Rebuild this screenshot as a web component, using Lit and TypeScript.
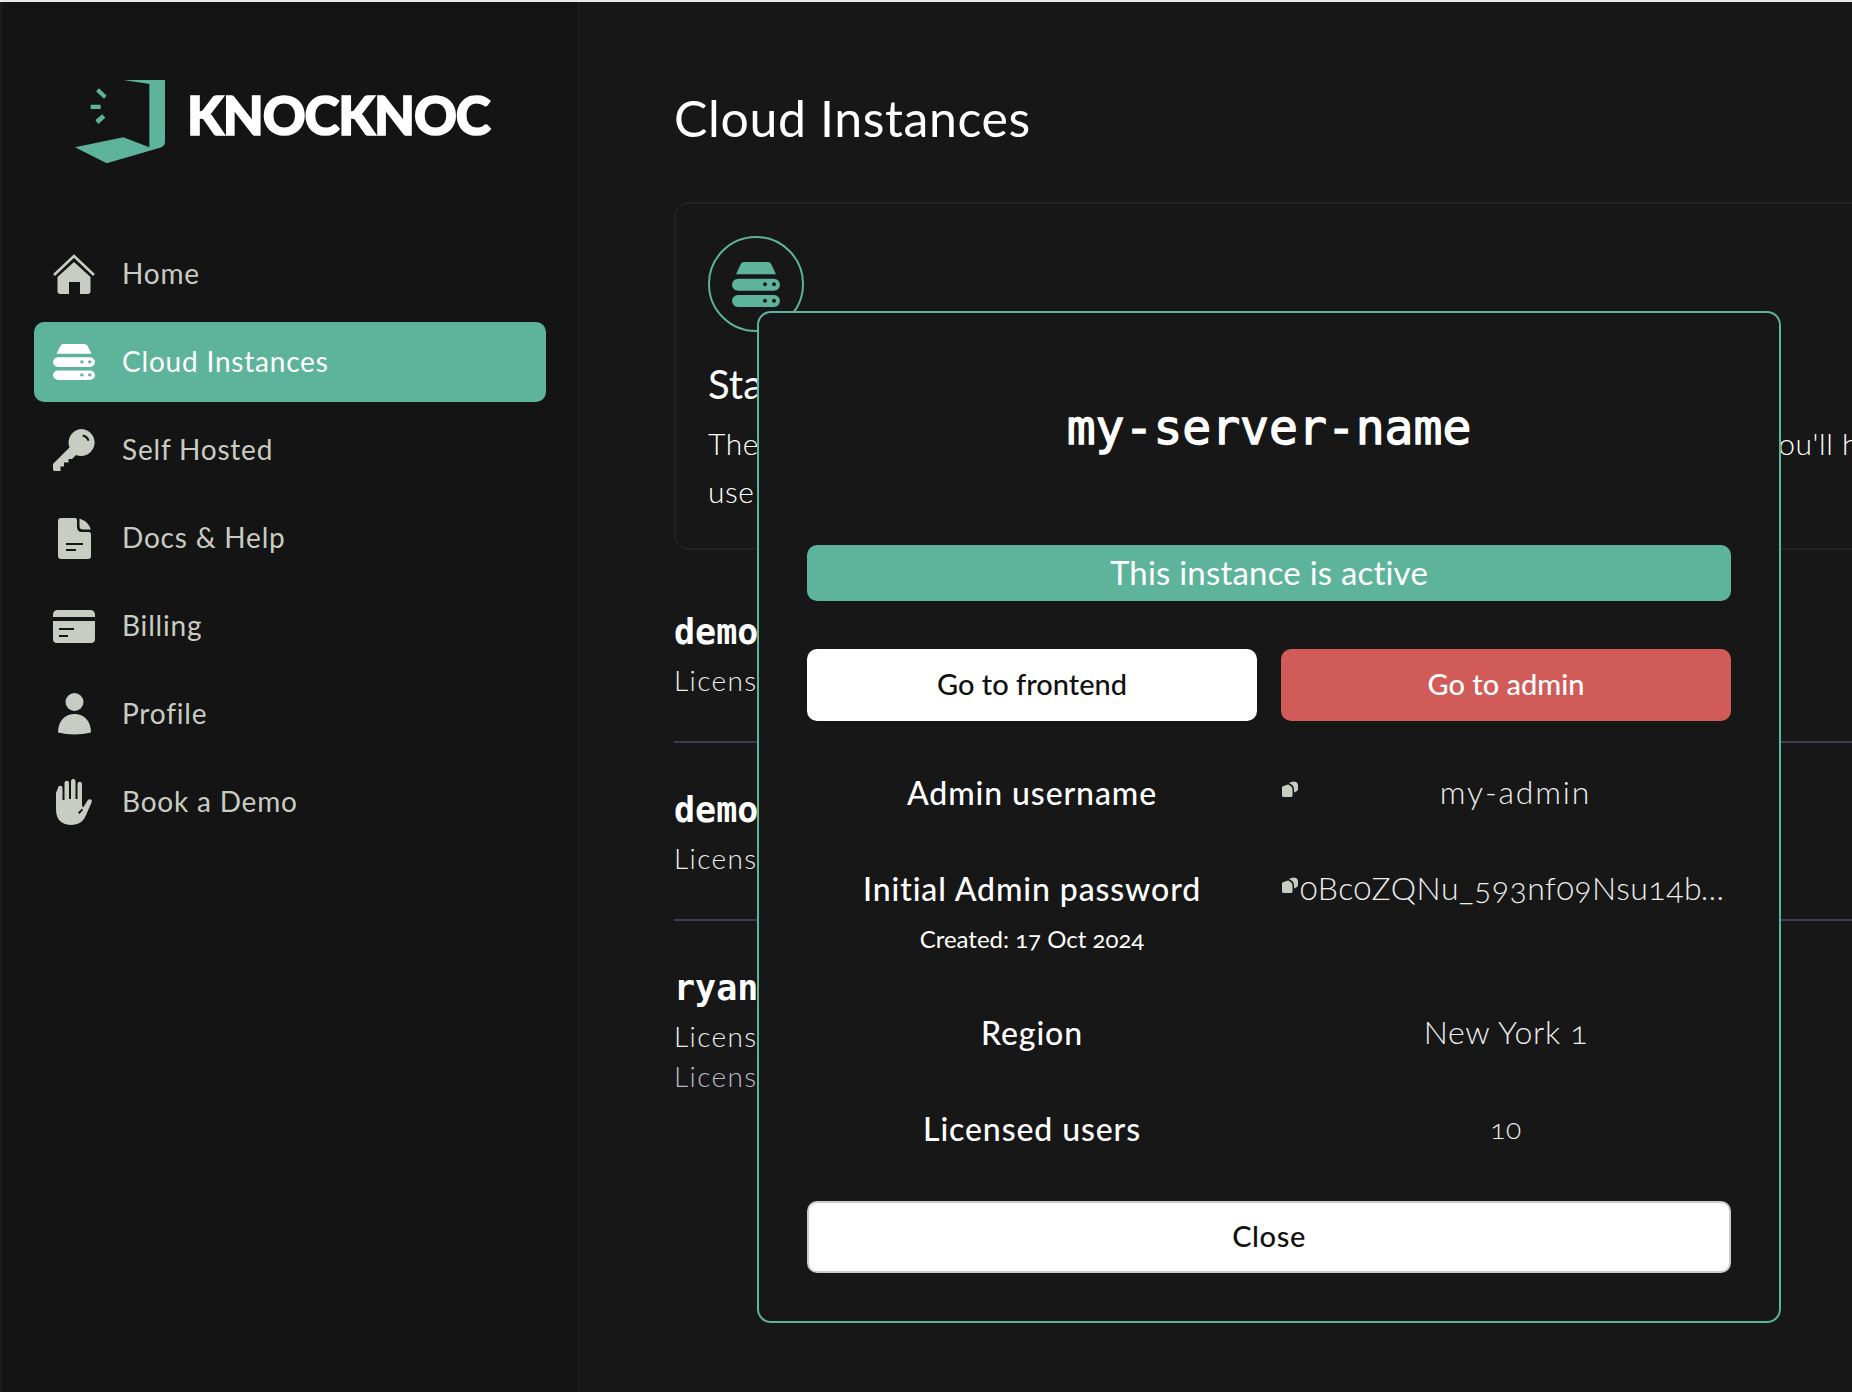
import { LitElement, html, css, svg } from 'lit';
import { customElement } from 'lit/decorators.js';

// server glyph is used both in the nav and the card badge
const serverIcon = svg`<path fill-rule="evenodd" d="M12 37 26 7Q29 0 36 0H108Q115 0 118 7L132 37ZM18 50H126A18 18 0 0 1 126 86H18A18 18 0 0 1 18 50ZM99 61A6 6 0 1 0 99 73 6 6 0 1 0 99 61ZM126 61A6 6 0 1 0 126 73 6 6 0 1 0 126 61ZM18 99H126A18 18 0 0 1 126 135H18A18 18 0 0 1 18 99ZM99 110A6 6 0 1 0 99 122 6 6 0 1 0 99 110ZM126 110A6 6 0 1 0 126 122 6 6 0 1 0 126 110Z"/>`;

const icons: Record<string, unknown> = {
  home: html`<svg width="42" height="40" viewBox="0 0 42 40" fill="currentColor"><path d="M1 21 21 2 41 21" fill="none" stroke="currentColor" stroke-width="2.6"/><path fill-rule="evenodd" d="M21 8 37.500 23V37Q37.500 40 34.500 40H27V28H16V40H7.500Q4.500 40 4.500 37V23Z"/></svg>`,
  server: html`<svg width="42" height="36" viewBox="0 0 144 135" preserveAspectRatio="none" fill="currentColor">${serverIcon}</svg>`,
  key: html`<svg width="42" height="42" viewBox="0 0 42 42" fill="currentColor"><path fill-rule="evenodd" d="M28.500 0A13.500 13.500 0 1 1 23 26L19 30H15.500V33.500H11V37.500H7.500V42H1.500Q0 42 0 40V35L16.500 18.500A13.500 13.500 0 0 1 28.500 0ZM30 5.500 29.500 7.500Q33.500 8.500 34.500 12L36.500 11.500Q35 6.500 30 5.500Z"/></svg>`,
  doc: html`<svg width="33" height="41" viewBox="0 0 33 41" fill="currentColor"><path fill-rule="evenodd" d="M3 0H17Q19 0 19 2V9Q19 14 24 14H31Q33 14 33 16V38Q33 41 30 41H3Q0 41 0 38V3Q0 0 3 0ZM8 25V27H25V25ZM8 31V33H18V31Z"/><path d="M21.500 .5Q31 4 32.800 11.500H25Q21.500 11.500 21.500 8Z"/></svg>`,
  card: html`<svg width="42" height="33" viewBox="0 0 42 33" fill="currentColor"><path fill-rule="evenodd" d="M5 0H37Q42 0 42 5V7H0V5Q0 0 5 0ZM0 11H42V29Q42 33 38 33H4Q0 33 0 29ZM6 18V20H21V18ZM6 25V27H15V25Z"/></svg>`,
  person: html`<svg width="33" height="42" viewBox="0 0 33 42" fill="currentColor"><circle cx="16.500" cy="9" r="9"/><path d="M16.500 21C26 21 33 28 33 39.500Q25 41.500 16.500 41.500T0 39.500C0 28 7 21 16.500 21Z"/></svg>`,
  hand: html`<svg width="36" height="46" viewBox="0 0 36 46" fill="currentColor"><path fill-rule="evenodd" d="M2 9A2 2 0 0 1 6.500 9V21H8.500V4A2.200 2.200 0 0 1 13 4V20H15V2.200A2.200 2.200 0 0 1 19.500 2.200V20H21.500V5A2.200 2.200 0 0 1 26 5V25Q26 29 27.500 28L31.500 21.500Q33 19.500 35 20.500 36.500 21.500 35.500 23.500L30.500 35Q26.500 46 16 46 0 46 0 30V14Z M22 33.500 26 29.500 27 31 23.500 35Z"/></svg>`,
};

const nav = [
  { label: 'Home', icon: 'home' },
  { label: 'Cloud Instances', icon: 'server', active: true },
  { label: 'Self Hosted', icon: 'key' },
  { label: 'Docs & Help', icon: 'doc' },
  { label: 'Billing', icon: 'card' },
  { label: 'Profile', icon: 'person' },
  { label: 'Book a Demo', icon: 'hand' },
];

const instances = [
  { name: 'demo-server', lines: ['Licensed users: 10'] },
  { name: 'demo-staging', lines: ['Licensed users: 5'] },
  { name: 'ryan-test', lines: ['Licensed users: 10', 'License expires soon'] },
];

const copyIcon = html`<svg class="copy" width="16" height="16" viewBox="0 0 16 16" fill="currentColor"><path d="M7 2Q9 .5 12 .5 16 1 16 4V8Q16 10 12 11.500V8Q12 4 7 2Z"/><path d="M1.500 5 6 3.500Q10 5 10.500 8V14.500Q10.500 16 9 16H1.500Q0 16 0 14.500V6.500Q0 5 1.500 5Z"/></svg>`;

@customElement('app-root')
export class AppRoot extends LitElement {
  static styles = css`
    :host {
      display: block;
      position: relative;
      width: 1852px;
      height: 1392px;
      overflow: hidden;
      font-family: 'Lato', sans-serif;
      font-variant-numeric: oldstyle-nums;
      color: #fff;
      background: #171717;
      border-top: 2px solid #e8e8e8;
      box-sizing: border-box;
    }
    .layout {
      display: flex;
      height: 1390px;
    }
    .sidebar {
      width: 577px;
      margin-left: 2px;
      box-sizing: border-box;
      flex: none;
      background: #141414;
      border-right: 1px solid #222;
      padding: 0 32px;
      box-shadow: -2px 0 0 #1d1d1d;
    }
    .brand {
      display: flex;
      align-items: flex-start;
      height: 232px;
      box-sizing: border-box;
      padding: 58px 0 0 26px;
    }
    .brand svg {
      flex: none;
    }
    .brand span {
      font-weight: 900;
      font-size: 53px;
      line-height: 60px;
      margin: 25px 0 0 7px;
      letter-spacing: -1.1px;
      white-space: nowrap;
      -webkit-text-stroke: 1.6px #fff;
    }
    nav {
      display: flex;
      flex-direction: column;
      gap: 8px;
    }
    .item {
      display: flex;
      align-items: center;
      height: 80px;
      box-sizing: border-box;
      border-radius: 10px;
      color: #c9ccc2;
      font-size: 28px;
      padding: 0 0 2px 19px;
      letter-spacing: 0.8px;
    }
    .item.active {
      background: #5eb39b;
      color: #fff;
    }
    .item .ico {
      width: 42px;
      margin-right: 27px;
      display: flex;
      justify-content: center;
      flex: none;
      position: relative;
      top: 1px;
    }
    main {
      flex: 1;
      min-width: 0;
      padding-left: 95px;
      overflow: hidden;
    }
    h1 {
      margin: 84px 0 0;
      font-size: 50px;
      line-height: 64px;
      font-weight: 400;
      letter-spacing: 0.62px;
      white-space: nowrap;
    }
    .panel {
      width: 1300px;
      height: 348px;
      margin-top: 52px;
      box-sizing: border-box;
      border: 2px solid #222;
      border-radius: 16px;
      padding: 32px;
    }
    .badge {
      width: 96px;
      height: 96px;
      box-sizing: border-box;
      border: 2px solid #5eb39b;
      border-radius: 50%;
      color: #5eb39b;
      display: flex;
      align-items: center;
      justify-content: center;
    }
    .panel h2 {
      margin: 26px 0 0;
      font-size: 40px;
      line-height: 52px;
      font-weight: 400;
    }
    .panel p {
      margin: 9px 0 0;
      font-size: 30px;
      line-height: 48px;
      font-weight: 300;
      letter-spacing: 0.55px;
      white-space: nowrap;
    }
    .panel p span {
      display: block;
    }
    .rows {
      width: 1300px;
      margin-top: 15px;
    }
    .row {
      height: 178px;
      box-sizing: border-box;
      padding-top: 43px;
      border-bottom: 2px solid #3a3f4b;
    }
    .row:last-child {
      border-bottom: none;
    }
    .row .name {
      font-family: 'DejaVu Sans Mono', monospace;
      font-weight: 700;
      font-size: 35px;
      line-height: 48px;
    }
    .row .lic {
      font-size: 28px;
      line-height: 40px;
      font-weight: 300;
      letter-spacing: 1.4px;
      color: #eee;
    }
    .row .name + .lic {
      margin-top: 4px;
    }
    .row .lic + .lic {
      color: #b9bcc2;
    }

    /* dialog sits over everything else */
    .dialog {
      position: absolute;
      left: 757px;
      top: 309px;
      width: 1024px;
      height: 1012px;
      box-sizing: border-box;
      background: #171717;
      border: 2px solid #5eb39b;
      border-radius: 14px;
      padding: 0 48px;
    }
    .dialog h3 {
      margin: 0;
      height: 228px;
      padding-bottom: 4px;
      display: flex;
      align-items: center;
      justify-content: center;
      font-family: 'DejaVu Sans Mono', monospace;
      font-size: 48px;
      font-weight: 400;
      -webkit-text-stroke: 1.3px #fff;
    }
    .status {
      height: 56px;
      border-radius: 10px;
      background: #5eb39b;
      display: flex;
      align-items: center;
      justify-content: center;
      font-size: 33px;
      letter-spacing: 0.2px;
      padding-bottom: 2px;
      box-sizing: border-box;
    }
    .actions {
      display: grid;
      grid-template-columns: 1fr 1fr;
      gap: 24px;
      margin-top: 48px;
    }
    .btn {
      display: flex;
      align-items: center;
      justify-content: center;
      height: 72px;
      padding-bottom: 4px;
      border-radius: 10px;
      font-size: 29px;
      font-weight: 500;
      background: #fff;
      color: #111;
      box-sizing: border-box;
    }
    .btn.danger {
      background: #d15b58;
      color: #fff;
    }
    .details {
      display: grid;
      grid-template-columns: 1fr 1fr;
      column-gap: 24px;
      margin-top: 24px;
    }
    .label,
    .value {
      padding: 24px 0;
      font-size: 32px;
      line-height: 48px;
      min-width: 0;
    }
    .label {
      text-align: center;
      font-weight: 500;
      letter-spacing: 0.9px;
    }
    .label small {
      display: block;
      margin: 13px 0 9px;
      font-size: 24px;
      line-height: 26px;
      font-weight: 400;
      letter-spacing: 0;
    }
    .value {
      padding: 23px 0 25px;
      text-align: center;
      font-weight: 300;
      letter-spacing: 0.7px;
      color: #eee;
    }
    .value.copyable {
      display: flex;
      align-items: flex-start;
    }
    .copy {
      flex: none;
      margin: 13px 2px 0 1px;
      color: #c9ccc2;
    }
    .value .text {
      flex: 1;
      min-width: 0;
      overflow: hidden;
      white-space: nowrap;
      text-overflow: ellipsis;
    }
    .value .text.user {
      letter-spacing: 1.8px;
    }
    .value .text.secret {
      letter-spacing: 0.5px;
    }
    .value.small {
      font-size: 28px;
    }
    .btn.close {
      margin-top: 24px;
      border: 2px solid #ccc;
      letter-spacing: 0.6px;
    }
  `;

  render() {
    return html`
      <div class="layout">
        <aside class="sidebar">
          <div class="brand">
            <svg width="120" height="120" viewBox="0 0 360 360" fill="#5eb39b">
              <path d="M190 60H315V245Q315 258 300 263L140 310 45 262 190 232 268 262V72Z" />
              <path d="M117 85 140 107 132 116 108 94ZM92 134H122V147H92ZM106 180 127 163 136 173 115 192Z" />
            </svg>
            <span>KNOCKNOC</span>
          </div>
          <nav>
            ${nav.map(
              (n) => html`<div class="item ${n.active ? 'active' : ''}">
                <span class="ico">${icons[n.icon]}</span>${n.label}
              </div>`,
            )}
          </nav>
        </aside>
        <main>
          <h1>Cloud Instances</h1>
          <section class="panel">
            <div class="badge">
              <svg width="48" height="45" viewBox="0 0 144 135" fill="currentColor">${serverIcon}</svg>
            </div>
            <h2>Start a new instance</h2>
            <p>
              <span>The instance here is a private server for your own team, and once it is running you'll have</span>
              <span>use it as your admin.</span>
            </p>
          </section>
          <div class="rows">
            ${instances.map(
              (r) => html`<div class="row">
                <div class="name">${r.name}</div>
                ${r.lines.map((l) => html`<div class="lic">${l}</div>`)}
              </div>`,
            )}
          </div>
        </main>
      </div>

      <div class="dialog">
        <h3>my-server-name</h3>
        <div class="status">This instance is active</div>
        <div class="actions">
          <div class="btn">Go to frontend</div>
          <div class="btn danger">Go to admin</div>
        </div>
        <div class="details">
          <div class="label">Admin username</div>
          <div class="value copyable">${copyIcon}<span class="text user">my-admin</span></div>
          <div class="label">Initial Admin password<small>Created: 17 Oct 2024</small></div>
          <div class="value copyable">${copyIcon}<span class="text secret">0Bc0ZQNu_593nf09Nsu14bX7kLm2</span></div>
          <div class="label">Region</div>
          <div class="value">New York 1</div>
          <div class="label">Licensed users</div>
          <div class="value small">10</div>
        </div>
        <div class="btn close">Close</div>
      </div>
    `;
  }
}
